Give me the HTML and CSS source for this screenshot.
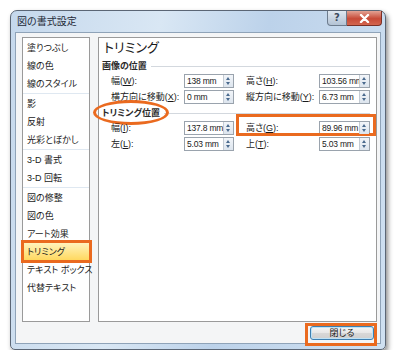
FILE: index.html
```html
<!DOCTYPE html>
<html lang="ja">
  <head>
    <meta charset="UTF-8" />
    <title>図の書式設定</title>
    <link rel="stylesheet" href="styles.css">
  </head>
  <body>
    <div class="window">
      <div class="titlebar">
        <span class="title">図の書式設定</span>
        <div class="caption-buttons">
          <span class="cap-help">?</span>
          <span class="cap-close">
            <svg width="11" height="9" viewBox="0 0 11 9"><path d="M2 1 L9 8 M9 1 L2 8" stroke="#fff" stroke-width="2.4" stroke-linecap="round"/></svg>
          </span>
        </div>
      </div>

      <div class="dialog">
        <div class="panes">
          <ul class="category-list">
            <li class="group">
              <div class="item">塗りつぶし</div>
              <div class="item">線の色</div>
              <div class="item">線のスタイル</div>
            </li>
            <li class="group">
              <div class="item">影</div>
              <div class="item">反射</div>
              <div class="item">光彩とぼかし</div>
            </li>
            <li class="group">
              <div class="item">3-D 書式</div>
              <div class="item">3-D 回転</div>
            </li>
            <li class="group last">
              <div class="item">図の修整</div>
              <div class="item">図の色</div>
              <div class="item">アート効果</div>
              <div class="item selected">トリミング</div>
              <div class="item">テキスト ボックス</div>
              <div class="item">代替テキスト</div>
            </li>
          </ul>

          <div class="settings">
            <div class="pane-title">トリミング</div>

            <div class="section-head">画像の位置</div>
            <div class="field-grid">
              <label>幅(<u>W</u>):</label>
              <div class="spin"><span class="spin-value">138 mm</span><span class="spin-btn"></span></div>
              <label>高さ(<u>H</u>):</label>
              <div class="spin"><span class="spin-value">103.56 mm</span><span class="spin-btn"></span></div>

              <label>横方向に移動(<u>X</u>):</label>
              <div class="spin"><span class="spin-value">0 mm</span><span class="spin-btn"></span></div>
              <label>縦方向に移動(<u>Y</u>):</label>
              <div class="spin"><span class="spin-value">6.73 mm</span><span class="spin-btn"></span></div>
            </div>

            <div class="section-head second">
              <span class="circled">トリミング位置</span>
            </div>
            <div class="field-grid">
              <label>幅(<u>I</u>):</label>
              <div class="spin"><span class="spin-value">137.8 mm</span><span class="spin-btn"></span></div>
              <label class="marked">高さ(<u>G</u>):</label>
              <div class="spin"><span class="spin-value">89.96 mm</span><span class="spin-btn"></span></div>

              <label>左(<u>L</u>):</label>
              <div class="spin"><span class="spin-value">5.03 mm</span><span class="spin-btn"></span></div>
              <label>上(<u>T</u>):</label>
              <div class="spin"><span class="spin-value">5.03 mm</span><span class="spin-btn"></span></div>
            </div>
          </div>
        </div>

        <div class="footer">
          <button class="close-btn" type="button">閉じる</button>
        </div>
      </div>
    </div>
  </body>
</html>
```

FILE: styles.css
```css
body {
  margin: 0;
  padding: 0;
  background: #ffffff;
  font-family: "Liberation Sans", "Noto Sans CJK JP", sans-serif;
  font-feature-settings: "palt";
  font-size: 9px;
  color: #1a1a1a;
}
.window {
  box-sizing: border-box;
  margin: 10px 0 0 10px;
  width: 376px;
  height: 340px;
  border: 1px solid #5b6675;
  border-radius: 7px 7px 5px 5px;
  background: linear-gradient(100deg, #c5d8ec 0%, #d9e7f4 35%, #bcd2ea 60%, #cfe0f1 100%);
  box-shadow: 2px 3px 5px rgba(0, 0, 0, 0.45);
}
.titlebar {
  display: flex;
  height: 21px;
}
.title {
  padding: 4px 0 0 6px;
  font-size: 10px;
  line-height: 13px;
  color: #1e2a38;
}
.caption-buttons {
  display: flex;
  margin-left: auto;
  margin-right: 3px;
  height: 15px;
}
.cap-help {
  box-sizing: border-box;
  width: 20px;
  height: 15px;
  border: 1px solid #6d7c8e;
  border-top: none;
  border-radius: 0 0 0 4px;
  background: linear-gradient(#dfe7f0, #b3c3d5);
  color: #3c4a5c;
  font-family: "DejaVu Sans", sans-serif;
  font-weight: bold;
  font-size: 10px;
  line-height: 13px;
  text-align: center;
}
.cap-close {
  box-sizing: border-box;
  display: flex;
  align-items: center;
  justify-content: center;
  width: 35px;
  height: 15px;
  border: 1px solid #7a3026;
  border-left: none;
  border-top: none;
  border-radius: 0 0 4px 0;
  background: linear-gradient(#e3a394, #c74a37 55%, #d3664f);
}
.dialog {
  box-sizing: border-box;
  margin: 0 4px;
  height: 312px;
  border: 1px solid #8fa3b8;
  background: #f4f5f6;
  padding: 4px 4px 0 6px;
}
.panes {
  display: flex;
  gap: 8px;
  height: 285px;
}
.category-list {
  box-sizing: border-box;
  list-style: none;
  margin: 0;
  padding: 1px 0 0 0;
  width: 68px;
  border: 1px solid #9a9a9a;
  background: #ffffff;
}
.group {
  border-bottom: 1px solid #dfe8f1;
  margin-bottom: 1px;
}
.group.last {
  border-bottom: none;
}
.item {
  position: relative;
  height: 18px;
  line-height: 18px;
  padding-left: 4px;
  white-space: nowrap;
  color: #1a1a1a;
}
.item.selected {
  background: linear-gradient(#fff3bd, #ffd75a);
}
.item.selected::after {
  content: "";
  position: absolute;
  top: -3px;
  left: -2px;
  right: -3px;
  bottom: -2px;
  border: 3px solid #ea6a1f;
}
.settings {
  box-sizing: border-box;
  flex: 1;
  border: 1px solid #9a9a9a;
  background: #ffffff;
  padding: 0 6px 0 3px;
}
.pane-title {
  height: 22px;
  padding: 0 0 0 2px;
  font-size: 13px;
  line-height: 20px;
  color: #1a1a1a;
}
.section-head {
  display: flex;
  align-items: center;
  gap: 4px;
  height: 12px;
  line-height: 12px;
  font-weight: bold;
  color: #2a2a2a;
}
.section-head::after {
  content: "";
  flex: 1;
  border-top: 1px solid #d3d8de;
}
.section-head.second {
  margin-top: 2px;
}
.circled {
  position: relative;
}
.circled::before {
  content: "";
  position: absolute;
  left: -9px;
  right: -9px;
  top: -7px;
  bottom: -6px;
  border: 3px solid #ea6a1f;
  border-radius: 50%;
}
.field-grid {
  display: grid;
  grid-template-columns: 73px 50px 12px 73px 51px;
  grid-auto-rows: 16px;
  align-items: center;
  padding-left: 9px;
  margin-top: 1px;
}
.field-grid label {
  position: relative;
  line-height: 12px;
  white-space: nowrap;
  color: #1a1a1a;
}
.field-grid label:nth-of-type(2n) {
  grid-column: 4;
}
.marked::after {
  content: "";
  position: absolute;
  left: -10px;
  top: -8px;
  width: 134px;
  height: 16px;
  border: 3px solid #ea6a1f;
}
.spin {
  box-sizing: border-box;
  display: flex;
  height: 14px;
  border: 1px solid #9aa3ad;
  background: #ffffff;
}
.spin-value {
  flex: 1;
  padding-left: 2px;
  font-size: 8.5px;
  letter-spacing: -0.2px;
  line-height: 12px;
  white-space: nowrap;
  overflow: hidden;
}
.spin-btn {
  position: relative;
  width: 9px;
  border-left: 1px solid #c5ccd4;
  background: linear-gradient(#f2f5f9, #dde5ee);
}
.spin-btn::before,
.spin-btn::after {
  content: "";
  position: absolute;
  left: 2px;
  border-left: 2.5px solid transparent;
  border-right: 2.5px solid transparent;
}
.spin-btn::before {
  top: 2px;
  border-bottom: 3px solid #4a6a8e;
}
.spin-btn::after {
  bottom: 2px;
  border-top: 3px solid #4a6a8e;
}
.footer {
  display: flex;
  justify-content: flex-end;
  padding: 4px 2px 0 0;
}
.close-btn {
  position: relative;
  box-sizing: border-box;
  width: 64px;
  height: 14px;
  padding: 0;
  border: 1px solid #3c7fb1;
  border-radius: 3px;
  background: linear-gradient(#f6f6f6 0%, #e6e6e6 50%, #d8d8d8 51%, #cfcfcf 100%);
  box-shadow: inset 0 0 0 1px #bde2f7;
  font-family: "Liberation Sans", "Noto Sans CJK JP", sans-serif;
  font-feature-settings: "palt";
  font-size: 9px;
  line-height: 12px;
  color: #1a1a1a;
}
.close-btn::after {
  content: "";
  position: absolute;
  left: -6px;
  right: -4px;
  top: -4px;
  bottom: -7px;
  border: 3px solid #ea6a1f;
}
```
